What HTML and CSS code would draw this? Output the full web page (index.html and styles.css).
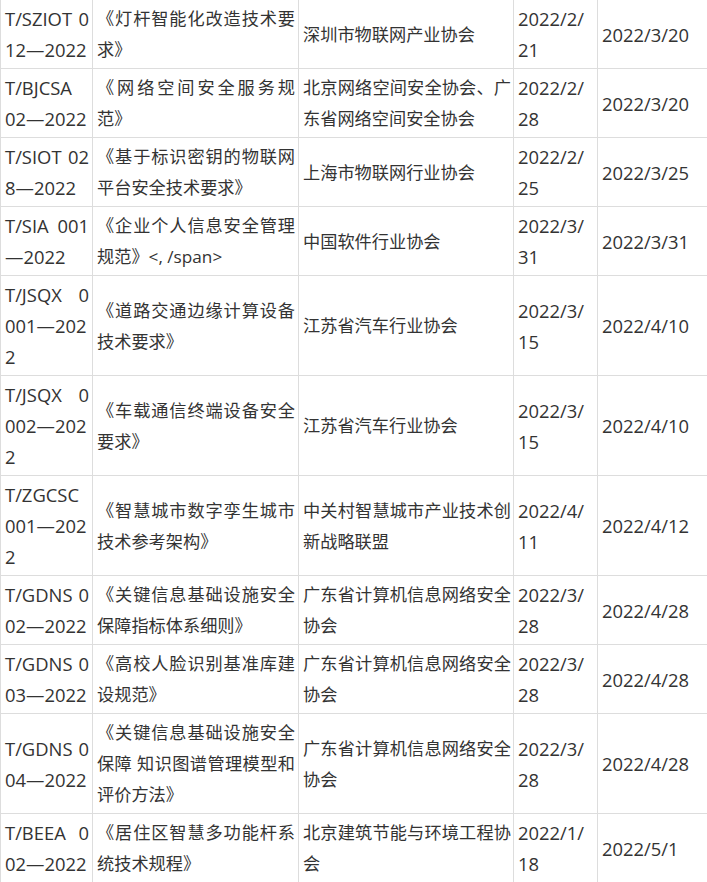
FILE: index.html
```html
<!DOCTYPE html>
<html lang="zh-CN">
<head>
<meta charset="utf-8">
<title>团体标准</title>
<link rel="stylesheet" href="styles.css">
</head>
<body>
<table class="std-table">
  <colgroup>
    <col class="c-code">
    <col class="c-name">
    <col class="c-org">
    <col class="c-pub">
    <col class="c-impl">
  </colgroup>
  <tbody>
    <tr>
      <td class="code">T/SZIOT 012—2022</td>
      <td class="name">《灯杆智能化改造技术要求》</td>
      <td class="org">深圳市物联网产业协会</td>
      <td class="date pub">2022/2/21</td>
      <td class="date">2022/3/20</td>
    </tr>
    <tr>
      <td class="code keep-words">T/BJCSA 02—2022</td>
      <td class="name">《网络空间安全服务规范》</td>
      <td class="org">北京网络空间安全协会、广东省网络空间安全协会</td>
      <td class="date pub">2022/2/28</td>
      <td class="date">2022/3/20</td>
    </tr>
    <tr>
      <td class="code">T/SIOT 028—2022</td>
      <td class="name">《基于标识密钥的物联网平台安全技术要求》</td>
      <td class="org">上海市物联网行业协会</td>
      <td class="date pub">2022/2/25</td>
      <td class="date">2022/3/25</td>
    </tr>
    <tr>
      <td class="code">T/SIA 001—2022</td>
      <td class="name">《企业个人信息安全管理规范》&lt;, /span&gt;</td>
      <td class="org">中国软件行业协会</td>
      <td class="date pub">2022/3/31</td>
      <td class="date">2022/3/31</td>
    </tr>
    <tr>
      <td class="code">T/JSQX&nbsp; 0001—2022</td>
      <td class="name">《道路交通边缘计算设备技术要求》</td>
      <td class="org">江苏省汽车行业协会</td>
      <td class="date pub">2022/3/15</td>
      <td class="date">2022/4/10</td>
    </tr>
    <tr>
      <td class="code">T/JSQX&nbsp; 0002—2022</td>
      <td class="name">《车载通信终端设备安全要求》</td>
      <td class="org">江苏省汽车行业协会</td>
      <td class="date pub">2022/3/15</td>
      <td class="date">2022/4/10</td>
    </tr>
    <tr>
      <td class="code">T/ZGCSC 001—2022</td>
      <td class="name">《智慧城市数字孪生城市技术参考架构》</td>
      <td class="org">中关村智慧城市产业技术创新战略联盟</td>
      <td class="date pub">2022/4/11</td>
      <td class="date">2022/4/12</td>
    </tr>
    <tr>
      <td class="code">T/GDNS 002—2022</td>
      <td class="name">《关键信息基础设施安全保障指标体系细则》</td>
      <td class="org">广东省计算机信息网络安全协会</td>
      <td class="date pub">2022/3/28</td>
      <td class="date">2022/4/28</td>
    </tr>
    <tr>
      <td class="code">T/GDNS 003—2022</td>
      <td class="name">《高校人脸识别基准库建设规范》</td>
      <td class="org">广东省计算机信息网络安全协会</td>
      <td class="date pub">2022/3/28</td>
      <td class="date">2022/4/28</td>
    </tr>
    <tr>
      <td class="code">T/GDNS 004—2022</td>
      <td class="name">《关键信息基础设施安全保障 知识图谱管理模型和评价方法》</td>
      <td class="org">广东省计算机信息网络安全协会</td>
      <td class="date pub">2022/3/28</td>
      <td class="date">2022/4/28</td>
    </tr>
    <tr>
      <td class="code">T/BEEA&nbsp; 002—2022</td>
      <td class="name">《居住区智慧多功能杆系统技术规程》</td>
      <td class="org">北京建筑节能与环境工程协会</td>
      <td class="date pub">2022/1/18</td>
      <td class="date">2022/5/1</td>
    </tr>
  </tbody>
</table>
</body>
</html>
```

FILE: styles.css
```css
html, body {
  margin: 0;
  padding: 0;
  background: #ffffff;
  overflow: hidden;
}

.std-table {
  border-collapse: collapse;
  table-layout: fixed;
  width: 717px;
  font-family: "Open Sans", "Noto Sans CJK SC", sans-serif;
  font-size: 17.2px;
  line-height: 31px;
  color: #333333;
  text-spacing-trim: space-all;
}

.c-code { width: 92px; }
.c-name { width: 206px; }
.c-org { width: 215px; }
.c-pub { width: 84px; }
.c-impl { width: 120px; }

.std-table td {
  border: 1px solid #dddddd;
  padding: 3px 3px 3px 4px;
  text-align: justify;
  vertical-align: middle;
  word-break: break-all;
  text-spacing-trim: space-all;
}

.std-table tr:first-child td {
  border-top: none;
}

.std-table td.code,
.std-table td.date {
  font-size: 18.4px;
}

.std-table td.org {
  padding-right: 2px;
}

.std-table td.pub {
  padding-right: 4px;
}

.std-table td.keep-words {
  word-break: normal;
  overflow-wrap: anywhere;
}
```
